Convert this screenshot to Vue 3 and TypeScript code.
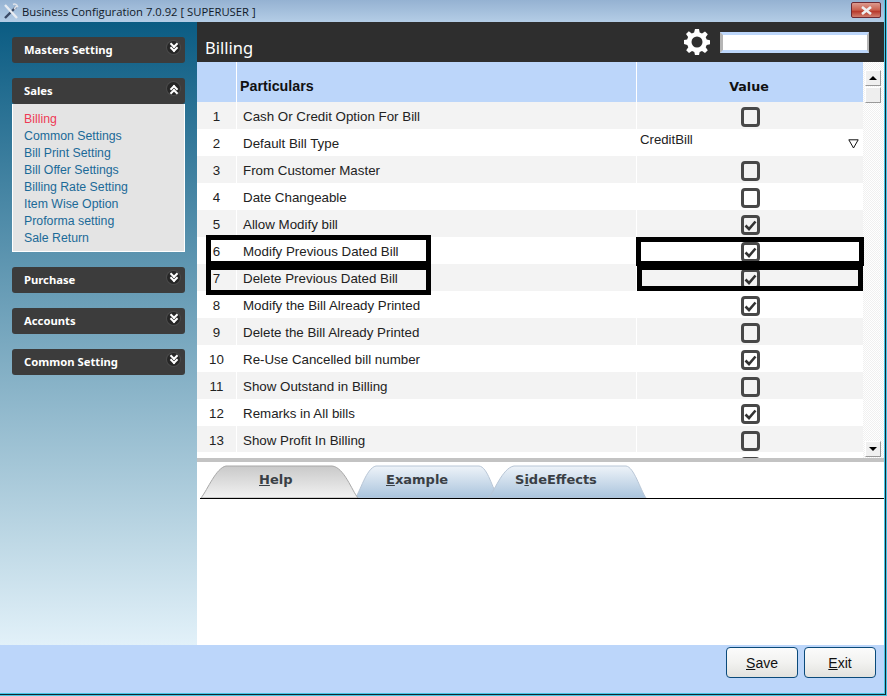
<script setup lang="ts">
interface Row { n: number; label: string; kind: 'check' | 'select'; checked?: boolean }
const rows: Row[] = [
  { n: 1, label: 'Cash Or Credit Option For Bill', kind: 'check', checked: false },
  { n: 2, label: 'Default Bill Type', kind: 'select' },
  { n: 3, label: 'From Customer Master', kind: 'check', checked: false },
  { n: 4, label: 'Date Changeable', kind: 'check', checked: false },
  { n: 5, label: 'Allow Modify bill', kind: 'check', checked: true },
  { n: 6, label: 'Modify Previous Dated Bill', kind: 'check', checked: true },
  { n: 7, label: 'Delete Previous Dated Bill', kind: 'check', checked: true },
  { n: 8, label: 'Modify the Bill Already Printed', kind: 'check', checked: true },
  { n: 9, label: 'Delete the Bill Already Printed', kind: 'check', checked: false },
  { n: 10, label: 'Re-Use Cancelled bill number', kind: 'check', checked: true },
  { n: 11, label: 'Show Outstand in Billing', kind: 'check', checked: false },
  { n: 12, label: 'Remarks in All bills', kind: 'check', checked: true },
  { n: 13, label: 'Show Profit In Billing', kind: 'check', checked: false },
  { n: 14, label: '', kind: 'check', checked: false },
]
const salesLinks = ['Billing', 'Common Settings', 'Bill Print Setting', 'Bill Offer Settings', 'Billing Rate Setting', 'Item Wise Option', 'Proforma setting', 'Sale Return']
const gearPath = 'M11 0h4l.7 3.6 2.3 1 3-2.1 2.8 2.8-2.1 3 1 2.3 3.3.6v4l-3.3.7-1 2.3 2.1 3-2.8 2.8-3-2.1-2.3 1-.7 3.3h-4l-.7-3.3-2.3-1-3 2.1-2.8-2.8 2.1-3-1-2.3L-.2 15v-4l3.3-.6 1-2.3-2.1-3L4.8 2.3l3 2.1 2.3-1z'
</script>

<template>
  <div class="frame-outer">
    <div class="frame-mid">
      <div class="window">
        <header class="titlebar">
          <svg class="app-icon" width="17" height="17" viewBox="0 0 17 17">
            <path d="M3 15 14 4" stroke="#3a4a66" stroke-width="2.4" />
            <path d="M3 2l12 13" stroke="#e8ecf2" stroke-width="2.4" />
            <path d="M11 1.500c2-1 4 0 4.500 2l-2 .5-1 1.500 1 1" fill="none" stroke="#dfe3ea" stroke-width="1.500" />
          </svg>
          <span class="title-text">Business Configuration 7.0.92 [ SUPERUSER ]</span>
          <div class="close-btn">
            <svg width="13" height="9" viewBox="0 0 13 9"><path d="M2 1l9 7M11 1 2 8" stroke="#eef0f2" stroke-width="2.600" /></svg>
          </div>
        </header>

        <div class="content">
          <aside class="sidebar">
            <section class="panel">
              <div class="panel-head"><span>Masters Setting</span><i class="chev down" /></div>
            </section>
            <section class="panel">
              <div class="panel-head"><span>Sales</span><i class="chev up" /></div>
              <ul class="panel-body">
                <li v-for="(l, i) in salesLinks" :key="l" :class="{ active: i === 0 }">{{ l }}</li>
              </ul>
            </section>
            <section class="panel">
              <div class="panel-head"><span>Purchase</span><i class="chev down" /></div>
            </section>
            <section class="panel">
              <div class="panel-head"><span>Accounts</span><i class="chev down" /></div>
            </section>
            <section class="panel">
              <div class="panel-head"><span>Common Setting</span><i class="chev down" /></div>
            </section>
          </aside>

          <main class="main">
            <div class="page-head">
              <h1>Billing</h1>
              <svg class="gear" width="26" height="26" viewBox="0 0 26 26">
                <path :d="gearPath" fill="#fff" />
                <circle cx="13" cy="13" r="5.500" fill="#2e2e2e" />
              </svg>
              <div class="search" />
            </div>

            <div class="grid-wrap">
              <div class="grid">
                <div class="grid-head">
                  <div class="c-n" />
                  <div class="c-label">Particulars</div>
                  <div class="c-val">Value</div>
                </div>
                <div v-for="r in rows" :key="r.n" class="row" :class="{ odd: r.n % 2 === 1 }">
                  <div class="c-n">{{ r.n < 14 ? r.n : '' }}</div>
                  <div class="c-label">{{ r.label }}</div>
                  <div class="c-val">
                    <template v-if="r.kind === 'select'">
                      <span class="sel-text">CreditBill</span>
                      <svg class="sel-arrow" width="11" height="10" viewBox="0 0 11 10"><path d="M.8.8h9.400L5.500 9z" fill="none" stroke="#111" /></svg>
                    </template>
                    <span v-else class="box">
                      <svg v-if="r.checked" width="13" height="12" viewBox="0 0 13 12"><path d="M1.500 6.500 5 10 11.500 2.500" fill="none" stroke="#333" stroke-width="2.600" /></svg>
                    </span>
                  </div>
                </div>
              </div>
              <div class="scrollbar">
                <div class="sb-btn"><i class="tri-up" /></div>
                <div class="sb-thumb" />
                <div class="sb-track" />
                <div class="sb-btn"><i class="tri-down" /></div>
              </div>

              <div class="mark mark-l1" />
              <div class="mark mark-l2" />
              <div class="mark mark-r1" />
              <div class="mark mark-r2" />
            </div>

            <div class="splitter" />

            <div class="tabs">
              <svg class="tabs-bg" width="460" height="33" viewBox="0 0 460 33">
                <defs>
                  <linearGradient id="tabBlue" x1="0" y1="0" x2="0" y2="1">
                    <stop offset="0" stop-color="#eef3f9" />
                    <stop offset="1" stop-color="#a9c3dc" />
                  </linearGradient>
                  <linearGradient id="tabGray" x1="0" y1="0" x2="0" y2="1">
                    <stop offset="0" stop-color="#c9c9c9" />
                    <stop offset="1" stop-color="#f2f2f2" />
                  </linearGradient>
                </defs>
                <path d="M155 33 C160 28 166 3 176 1 H279 C288 2 292 24 299 33 Z" fill="url(#tabBlue)" stroke="#b8c6d6" />
                <path d="M288 33 C294 28 302 3 314 1 H426 C434 2 440 24 446 33 Z" fill="url(#tabBlue)" stroke="#b8c6d6" />
                <path d="M1 33 C8 24 16 3 26 1 H132 C144 2 152 26 158 33 Z" fill="url(#tabGray)" stroke="#a8a8a8" />
              </svg>
              <span class="tab t-help"><u>H</u>elp</span>
              <span class="tab t-example"><u>E</u>xample</span>
              <span class="tab t-side">S<u>i</u>deEffects</span>
            </div>
            <div class="help-body" />
          </main>
        </div>

        <footer class="footer">
          <button class="btn"><u>S</u>ave</button>
          <button class="btn"><u>E</u>xit</button>
        </footer>
      </div>
    </div>
  </div>
</template>

<style>
html, body { margin: 0; background: #fff; }
</style>

<style scoped>
.frame-outer {
  width: 887px;
  height: 696px;
  box-sizing: border-box;
  border: solid #47c6e6;
  border-width: 0 1px 1px 0;
  overflow: hidden;
}
.frame-mid {
  height: 100%;
  box-sizing: border-box;
  border: solid #14282e;
  border-width: 0 1px 1px 0;
}
.window {
  height: 100%;
  box-sizing: border-box;
  border: solid #47c6e6;
  border-width: 0 1px 1px 0;
  display: flex;
  flex-direction: column;
  background: #bcd6fa;
  font-family: "Liberation Sans", Arial, sans-serif;
  overflow: hidden;
}
.titlebar {
  height: 22px;
  flex: none;
  display: flex;
  align-items: center;
  background: linear-gradient(#95b2d2, #b4cde6);
  position: relative;
}
.app-icon { margin-left: 2px; }
.title-text {
  margin-left: 3px;
  font: 11.250px "Open Sans", sans-serif;
  color: #111a2a;
}
.close-btn {
  position: absolute;
  left: 851px;
  top: 2px;
  width: 30px;
  height: 16px;
  box-sizing: border-box;
  border: 1px solid #6d2a33;
  border-radius: 2px;
  background: linear-gradient(#dc9a8e, #c9604e 50%, #b83a2c 60%, #d08070);
  display: flex;
  align-items: center;
  justify-content: center;
}
.content { flex: 1; display: flex; min-height: 0; }
.sidebar {
  width: 197px;
  flex: none;
  box-sizing: border-box;
  padding: 15px 12px 0;
  display: flex;
  flex-direction: column;
  gap: 15px;
  background: linear-gradient(#0b5c83, #e2f1f9);
}
.panel-head {
  height: 26px;
  box-sizing: border-box;
  padding: 0 0 2px 12px;
  display: flex;
  align-items: center;
  justify-content: space-between;
  background: #3c3c3c;
  border-radius: 3px;
  color: #fff;
  font: bold 11.250px "Noto Sans", sans-serif;
  position: relative;
}
.chev {
  position: absolute;
  right: 5px;
  top: 4px;
  width: 13px;
  height: 13px;
  border-radius: 50%;
  background: #262626;
  box-shadow: 0 0 0 1px #4a4a4a;
}
.chev::before, .chev::after {
  content: "";
  position: absolute;
  left: 3.500px;
  width: 4px;
  height: 4px;
  border: solid #fff;
  border-width: 0 2px 2px 0;
  transform: rotate(45deg);
}
.chev.down::before { top: 0; }
.chev.down::after { top: 4px; }
.chev.up::before { top: 4px; transform: rotate(225deg); }
.chev.up::after { top: 8px; transform: rotate(225deg); }
.panel-body {
  list-style: none;
  margin: 0;
  padding: 7px 0 4px 11px;
  height: 148px;
  box-sizing: border-box;
  background: #e4e4e4;
  border: 1px solid #fff;
  border-top: 0;
  font-size: 12.300px;
  color: #1b6a98;
}
.panel-body li { height: 17px; line-height: 17px; }
.panel-body li.active { color: #ee3a55; }

.main { flex: 1; min-width: 0; display: flex; flex-direction: column; background: #fff; }
.page-head {
  height: 40px;
  flex: none;
  background: #2e2e2e;
  display: flex;
  align-items: center;
  position: relative;
}
.page-head h1 {
  margin: 10px 0 0 8px;
  font: 400 16.500px "Noto Sans", sans-serif;
  color: #fff;
}
.gear { margin-left: auto; margin-right: 10px; }
.search {
  width: 149px;
  height: 21px;
  margin-right: 15px;
  box-sizing: border-box;
  border: solid #bcd6fa;
  border-width: 3px 0 3px 0;
  border-left: 3px solid #b5b5b5;
  border-right: 2px solid #b5b5b5;
  background: #fff;
}
.grid-wrap {
  height: 396px;
  flex: none;
  display: flex;
  overflow: hidden;
  position: relative;
}
.grid { width: 666px; flex: none; }
.grid-head, .row { display: grid; grid-template-columns: 39px 400px 227px; }
.grid-head {
  height: 40px;
  background: #bcd6fa;
  color: #111;
}
.grid-head .c-label {
  border-left: 1px solid #fff;
  padding: 8px 0 0 3px;
  display: flex;
  align-items: center;
  font: bold 14.250px "Liberation Sans", sans-serif;
}
.grid-head .c-val {
  border-left: 1px solid #fff;
  display: flex;
  align-items: center;
  justify-content: center;
  padding: 8px 2px 0 0;
  box-sizing: border-box;
  font: bold 12.700px "DejaVu Sans", sans-serif;
}
.row {
  height: 27px;
  background: #fff;
  font-size: 13.330px;
  color: #222;
  line-height: 29px;
}
.row.odd { background: #f3f3f3; }
.row:last-child { margin-top: -1px; }
.row .c-n { text-align: center; }
.row .c-label { border-left: 1px solid #fff; padding-left: 6px; }
.row .c-val {
  border-left: 1px solid #fff;
  position: relative;
  display: flex;
  align-items: flex-start;
  justify-content: center;
  padding-top: 5px;
  box-sizing: border-box;
}
.sel-text { position: absolute; left: 3px; top: -4px; font-size: 13.200px; }
.sel-arrow { position: absolute; right: 4px; top: 10px; }
.box {
  width: 19px;
  height: 20px;
  box-sizing: border-box;
  border: 3px solid #484848;
  border-radius: 4px;
  display: flex;
  align-items: center;
  justify-content: center;
}
.scrollbar {
  flex: 1;
  display: flex;
  flex-direction: column;
  padding: 8px 3px 1px 2px;
  box-sizing: border-box;
  background: repeating-conic-gradient(#f0f0f0 0 25%, #fff 0 50%) 0 0 / 2px 2px;
}
.sb-btn {
  height: 16px;
  flex: none;
  box-sizing: border-box;
  background: #f0f0f0;
  border: 1px solid;
  border-color: #fff #999 #999 #fff;
  display: flex;
  align-items: center;
  justify-content: center;
}
.sb-thumb {
  height: 16px;
  flex: none;
  margin-top: 1px;
  box-sizing: border-box;
  background: #eee;
  border: 1px solid;
  border-color: #fff #999 #999 #fff;
}
.sb-track { flex: 1; }
.tri-up { border: 4px solid transparent; border-top: 0; border-bottom: 4px solid #000; }
.tri-down { border: 4px solid transparent; border-bottom: 0; border-top: 4px solid #000; }

.mark { position: absolute; box-sizing: border-box; border: 5px solid #000; }
.mark-l1 { left: 9px; top: 173px; width: 225px; height: 31px; }
.mark-l2 { left: 9px; top: 203px; width: 225px; height: 30px; }
.mark-r1 { left: 439px; top: 175px; width: 228px; height: 29px; }
.mark-r2 { left: 440px; top: 203px; width: 226px; height: 26px; }

.splitter { height: 4px; flex: none; background: #c3c3c3; }
.tabs {
  height: 37px;
  flex: none;
  box-sizing: border-box;
  border-bottom: 1px solid #000;
  position: relative;
  margin-left: 3px;
}
.tabs-bg { position: absolute; left: 0; top: 3px; }
.tab {
  position: absolute;
  top: 10px;
  font: bold 13px "DejaVu Sans", sans-serif;
  color: #3a3f45;
}
.t-help { left: 59px; }
.t-example { left: 186px; }
.t-side { left: 315px; }
.help-body { flex: 1; }

.footer {
  height: 48px;
  flex: none;
  display: flex;
  justify-content: flex-end;
  align-items: flex-start;
  gap: 6px;
  padding: 2px 8px 0 0;
  box-sizing: border-box;
  background: #bcd6fa;
}
.btn {
  width: 72px;
  height: 31px;
  padding: 0;
  border: 1px solid #0a4a7a;
  border-radius: 4px;
  background: linear-gradient(#fbfbfb, #f2f2f0 50%, #e2e2de);
  font: 14px "Liberation Sans", sans-serif;
  color: #111;
}
</style>
